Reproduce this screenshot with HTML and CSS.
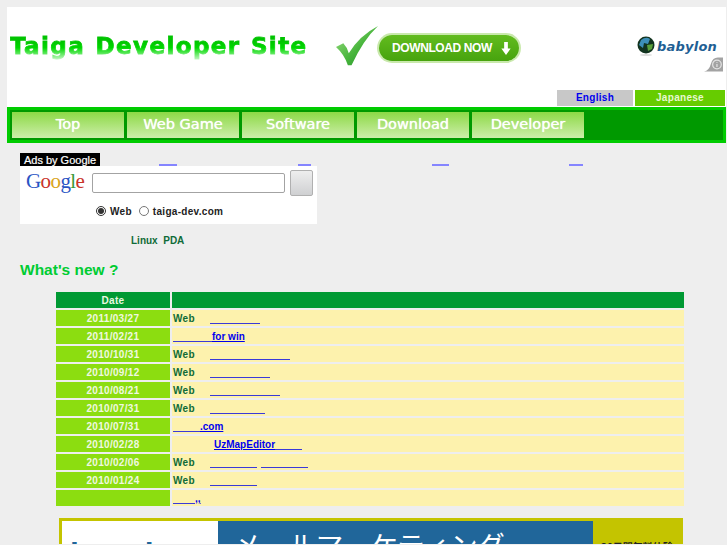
FILE: index.html
```html
<!DOCTYPE html>
<html lang="ja">
<head>
  <meta charset="UTF-8">
  <title>Taiga Developer Site</title>
  <link rel="stylesheet" href="styles.css">
</head>
<body>
  <div class="page">
    <!-- Header -->
    <div class="header">
      <div class="site-title">Taiga Developer Site</div>
      <a class="promo" href="#">
        <svg class="check" width="46" height="42" viewBox="0 0 48 46">
          <defs>
            <linearGradient id="checkfill" x1="0" y1="0" x2="1" y2="1">
              <stop offset="0" stop-color="#a4e28a"/>
              <stop offset="0.55" stop-color="#48b53c"/>
              <stop offset="1" stop-color="#1d8a2b"/>
            </linearGradient>
          </defs>
          <path d="M1 24 L9 20 Q13 24 15 31 Q26 12 47 1 Q31 16 18 44 L14 44 Q10 32 1 24 Z" fill="url(#checkfill)"/>
        </svg>
        <span class="dl-button">DOWNLOAD NOW
          <svg width="10" height="13" viewBox="0 0 10 14"><path d="M3 0 H7 V7 H10 L5 14 L0 7 H3 Z" fill="#fff"/></svg>
        </span>
      </a>
      <div class="header-right">
        <div class="babylon">
          <svg width="18" height="20" viewBox="0 0 18 20">
            <circle cx="9" cy="9" r="8.5" fill="#12331f"/>
            <path d="M4 4 Q9 0 13 3 L11 8 L7 7 L6 12 L2 9 Z" fill="#3d8fb8"/>
            <path d="M10 9 L16 8 L15 13 L11 15 Z" fill="#5aa03a"/>
            <ellipse cx="9" cy="19" rx="6" ry="1" fill="#ddd"/>
          </svg>
          <span>babylon</span>
        </div>
        <div class="info-tag">
          <svg width="19" height="15" viewBox="0 0 22 16">
            <path d="M0 16 Q6 15 8 7 Q10 0 16 0 H22 V16 Z" fill="#a3a3a3"/>
            <circle cx="15" cy="8" r="5" fill="none" stroke="#e4e4e4" stroke-width="1.4"/>
            <path d="M15 5 V6 M15 7.5 V11" stroke="#e4e4e4" stroke-width="1.4"/>
          </svg>
        </div>
        <div class="lang">
          <a class="lang-en" href="#">English</a>
          <a class="lang-ja" href="#">Japanese</a>
        </div>
      </div>
    </div>

    <!-- Menu -->
    <div class="nav">
      <a href="#">Top</a>
      <a href="#">Web Game</a>
      <a href="#">Software</a>
      <a href="#">Download</a>
      <a href="#">Developer</a>
    </div>

    <!-- Ad row -->
    <div class="ad-row">
      <span class="ad-label">Ads by Google</span>
      <a class="ad-link w18" href="#">&nbsp;</a>
      <a class="ad-link w13" href="#">&nbsp;</a>
      <a class="ad-link w17" href="#">&nbsp;</a>
      <a class="ad-link w14" href="#">&nbsp;</a>
    </div>
    <div class="search-box">
      <div class="search-top">
        <span class="google"><b class="g-blue">G</b><b class="g-red">o</b><b class="g-yellow">o</b><b class="g-blue">g</b><b class="g-green">l</b><b class="g-red">e</b></span>
        <input class="search-input" type="text">
        <button class="search-btn" type="button"></button>
      </div>
      <div class="search-scope">
        <input type="radio" name="scope" checked><label>Web</label>
        <input type="radio" name="scope"><label>taiga-dev.com</label>
      </div>
    </div>

    <p class="intro">Linux&nbsp; PDA</p>

    <h2 class="section-title">What's new ?</h2>

    <table class="news">
      <tr><th class="date">Date</th><th></th></tr>
      <tr><td class="date">2011/03/27</td><td>Web<a class="pad" href="#"><i class="u50"></i></a></td></tr>
      <tr><td class="date">2011/02/21</td><td><a href="#"><i class="u39"></i>for win</a></td></tr>
      <tr><td class="date">2010/10/31</td><td>Web<a class="pad" href="#"><i class="u80"></i></a></td></tr>
      <tr><td class="date">2010/09/12</td><td>Web<a class="pad" href="#"><i class="u60"></i></a></td></tr>
      <tr><td class="date">2010/08/21</td><td>Web<a class="pad" href="#"><i class="u70"></i></a></td></tr>
      <tr><td class="date">2010/07/31</td><td>Web<a class="pad" href="#"><i class="u55"></i></a></td></tr>
      <tr><td class="date">2010/07/31</td><td><a href="#"><i class="u27"></i>.com</a></td></tr>
      <tr><td class="date">2010/02/28</td><td class="indent"><a href="#">UzMapEditor<i class="u27"></i></a></td></tr>
      <tr><td class="date">2010/02/06</td><td>Web<a class="pad" href="#"><i class="u47"></i></a><a class="next" href="#"><i class="u47"></i></a></td></tr>
      <tr><td class="date">2010/01/24</td><td>Web<a class="pad" href="#"><i class="u47"></i></a></td></tr>
      <tr><td class="date"></td><td><a href="#"><i class="u22"></i>,,</a></td></tr>
    </table>

    <!-- Banner, cut off by the window -->
    <div class="banner">
      <div class="banner-logo">benchmark</div>
      <div class="banner-main">メールマーケティング</div>
      <div class="banner-side">30日間無料体験</div>
    </div>
  </div>
</body>
</html>
```

FILE: styles.css
```css
/* Reset and basic styles */
html {
  overflow: hidden;
  height: 545px;
}

body {
  margin: 0;
  background-color: #eee;
  color: #0f6b38;
  font-family: "Liberation Sans", Arial, sans-serif;
  font-size: 10px;
  font-weight: bold;
}

a {
  color: #0000ee;
}

.page {
  width: 719px;
  margin: 7px 0 0 7px;
}

/* Header */
.header {
  display: flex;
  height: 100px;
  background-color: #fff;
}

.site-title {
  width: 318px;
  margin: 26px 0 0 3px;
  height: 27px;
  font-family: "DejaVu Sans", sans-serif;
  font-size: 23px;
  font-weight: bold;
  line-height: 27px;
  letter-spacing: 1.4px;
  word-spacing: 1px;
  white-space: nowrap;
  background: linear-gradient(#00c400 30%, #00d800 55%, #c8f8c8 100%);
  -webkit-background-clip: text;
  background-clip: text;
  color: transparent;
  -webkit-text-stroke: 0.8px transparent;
}

.promo {
  display: flex;
  align-items: center;
  height: 42px;
  margin: 18px 0 0 6px;
  text-decoration: none;
}

.check {
  margin-right: -1px;
}

.dl-button {
  display: flex;
  align-items: center;
  gap: 9px;
  width: 140px;
  height: 26px;
  margin-top: 4px;
  padding-left: 13px;
  box-sizing: border-box;
  border-radius: 13px;
  background: linear-gradient(#62bc1e, #47a30e);
  box-shadow: 0 0 0 2px #c9e9ac;
  color: #fff;
  font-size: 12px;
  letter-spacing: -0.4px;
}

.header-right {
  display: flex;
  flex-direction: column;
  align-items: flex-end;
  flex: 1;
}

.babylon {
  display: flex;
  align-items: center;
  gap: 2px;
  margin: 29px 9px 0 0;
  height: 20px;
  color: #1f5f94;
  font-family: "DejaVu Sans", sans-serif;
  font-size: 13px;
  font-style: italic;
  font-weight: bold;
  letter-spacing: 0.2px;
}

.info-tag {
  display: flex;
  height: 16px;
  margin: 1px 3px 0 0;
}

.lang {
  display: flex;
  gap: 2px;
  margin: 17px 1px 0 0;
}

.lang a {
  height: 16px;
  line-height: 16px;
  text-align: center;
  text-decoration: none;
  letter-spacing: 0.3px;
}

.lang-en {
  width: 76px;
  background-color: #c8c8c8;
}

.lang a.lang-ja {
  width: 90px;
  background-color: #66cc00;
  color: #e8f8d0;
}

/* Menu */
.nav {
  display: flex;
  gap: 3px;
  height: 26px;
  padding: 2px;
  border: 3px solid #00cc00;
  background-color: #009900;
}

.nav a {
  width: 112px;
  background: linear-gradient(#8cd946, #cdeeaa);
  color: #fff;
  font-family: "DejaVu Sans", sans-serif;
  font-size: 14.5px;
  font-weight: normal;
  line-height: 25px;
  text-align: center;
  text-decoration: none;
  text-shadow: 0 0 1px #fff;
}

/* Ad row */
.ad-row {
  display: flex;
  align-items: flex-end;
  height: 13px;
  margin: 10px 0 0 13px;
}

.ad-label {
  width: 80px;
  height: 13px;
  background-color: #000;
  color: #fff;
  font-size: 11px;
  font-weight: normal;
  line-height: 14px;
  text-align: center;
  -webkit-text-stroke: 0.2px #fff;
}

.ad-link {
  height: 2px;
  background-color: #8585ff;
  overflow: hidden;
  font-size: 1px;
}

.w18 { width: 18px; margin-left: 59px; }
.w13 { width: 13px; margin-left: 121px; }
.w17 { width: 17px; margin-left: 121px; }
.w14 { width: 14px; margin-left: 120px; }

.search-box {
  width: 297px;
  height: 58px;
  margin-left: 13px;
  background-color: #fff;
  color: #222;
}

.search-top {
  display: flex;
  align-items: flex-start;
  height: 36px;
}

.google {
  width: 72px;
  padding: 3px 0 0 6px;
  box-sizing: border-box;
  font-family: "Liberation Serif", serif;
  font-size: 21px;
  line-height: 24px;
  letter-spacing: -0.6px;
}

.google b {
  font-weight: normal;
}

.g-blue { color: #2a55c4; }
.g-red { color: #c9342a; }
.g-yellow { color: #d9a520; }
.g-green { color: #3a9a3a; }

.search-input {
  width: 193px;
  height: 20px;
  margin-top: 7px;
  padding: 0;
  box-sizing: border-box;
  border: 1px solid #a3a3a3;
  border-radius: 2px;
  background-color: #fff;
}

.search-btn {
  width: 23px;
  height: 26px;
  margin: 4px 0 0 5px;
  padding: 0;
  border: 1px solid #b0b0b0;
  border-radius: 2px;
  background: linear-gradient(#eee, #cfd0d2);
}

.search-scope {
  display: flex;
  align-items: center;
  height: 18px;
  padding-left: 76px;
  font-size: 10px;
  letter-spacing: 0.3px;
}

.search-scope input {
  width: 10px;
  height: 10px;
  margin: 0 4px 0 0;
  accent-color: #333;
}

.search-scope label {
  margin-right: 7px;
}

.intro {
  margin: 11px 0 0 124px;
  line-height: 12px;
}

.section-title {
  margin: 14px 0 0 13px;
  color: #00cc33;
  font-size: 15.5px;
  line-height: 18px;
}

/* News table */
.news {
  width: 632px;
  margin: 11px 0 0 47px;
  border-collapse: separate;
  border-spacing: 2px;
  table-layout: fixed;
}

.news th,
.news td {
  height: 16px;
  padding: 1px 0 0 1px;
  box-sizing: border-box;
  line-height: 15px;
  letter-spacing: 0.3px;
  white-space: nowrap;
}

.news th {
  background-color: #009933;
  color: #e8f8e0;
}

.news td {
  background-color: #fdf2ad;
}

.news .date {
  width: 114px;
  padding: 1px 0 0 0;
  text-align: center;
}

.news td.date {
  background-color: #8cdd10;
  color: #f0f8e0;
}

/* link text that the original page drew as blank glyphs: only the rule is left */
.news i {
  display: inline-block;
  height: 1px;
  vertical-align: -2px;
  background-color: #3a3ad8;
}

.news a {
  letter-spacing: 0;
}

.news .pad {
  margin-left: 15px;
}

.news .next {
  margin-left: 4px;
}

.news .indent {
  padding-left: 42px;
}

.u22 { width: 22px; }
.u27 { width: 27px; }
.u39 { width: 39px; }
.u47 { width: 47px; }
.u50 { width: 50px; }
.u55 { width: 55px; }
.u60 { width: 60px; }
.u70 { width: 70px; }
.u80 { width: 80px; }

/* Banner */
.banner {
  display: flex;
  width: 624px;
  height: 26px;
  overflow: hidden;
  box-sizing: border-box;
  margin: 10px 0 0 52px;
  border: 3px solid #c4c400;
  border-bottom: 0;
  background-color: #c4c400;
}

.banner-logo {
  width: 156px;
  padding-left: 8px;
  box-sizing: border-box;
  background-color: #fff;
  color: #20669a;
  font-size: 32px;
  line-height: 66px;
}

.banner-main {
  width: 375px;
  padding-left: 16px;
  box-sizing: border-box;
  background-color: #20669a;
  color: #fff;
  font-family: "Noto Sans CJK JP", sans-serif;
  font-size: 27.3px;
  font-weight: normal;
  line-height: 46px;
  white-space: nowrap;
}

.banner-side {
  padding: 18px 0 0 8px;
  color: #222;
  font-family: "Noto Sans CJK JP", sans-serif;
  font-size: 10px;
  white-space: nowrap;
}
```
